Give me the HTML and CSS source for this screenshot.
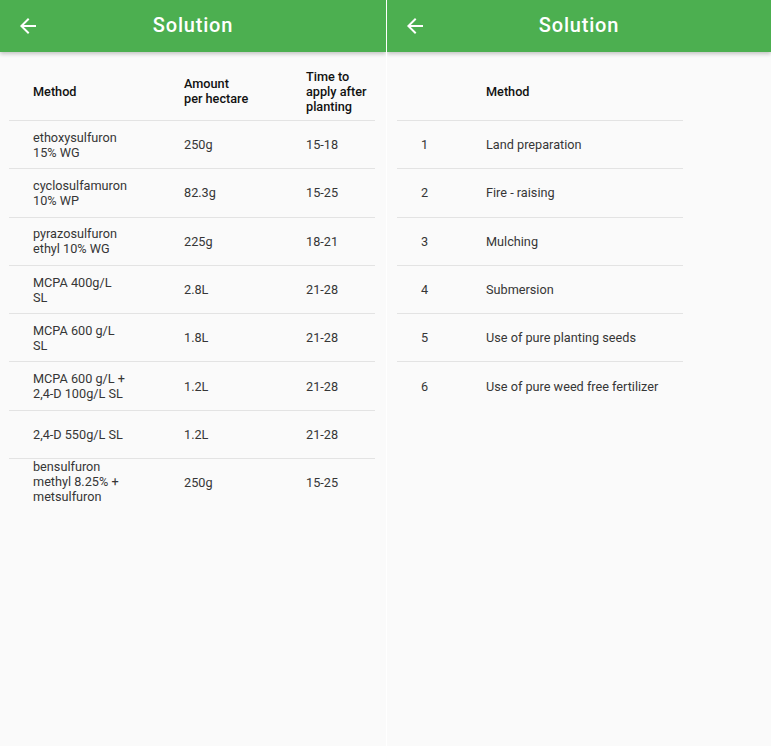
FILE: index.html
```html
<!DOCTYPE html>
<html lang="en">
<head>
<meta charset="utf-8">
<title>Solution</title>
<link rel="stylesheet" href="styles.css">
</head>
<body>
<div class="screens">
  <section class="panel panel-left">
    <header class="appbar">
      <div class="lead">
        <svg class="back" viewBox="0 0 24 24" width="24" height="24"><path d="M20 11H7.83l5.59-5.59L12 4l-8 8 8 8 1.41-1.41L7.83 13H20v-2z"/></svg>
      </div>
      <h1 class="title">Solution</h1>
      <div></div>
    </header>
    <div class="content content-left">
      <div class="table table-chem">
        <div class="row head">
          <div class="cell">Method</div>
          <div class="cell">Amount<br>per hectare</div>
          <div class="cell">Time to<br>apply after<br>planting</div>
        </div>
        <div class="row">
          <div class="cell">ethoxysulfuron<br>15% WG</div>
          <div class="cell">250g</div>
          <div class="cell">15-18</div>
        </div>
        <div class="row">
          <div class="cell">cyclosulfamuron<br>10% WP</div>
          <div class="cell">82.3g</div>
          <div class="cell">15-25</div>
        </div>
        <div class="row">
          <div class="cell">pyrazosulfuron<br>ethyl 10% WG</div>
          <div class="cell">225g</div>
          <div class="cell">18-21</div>
        </div>
        <div class="row">
          <div class="cell">MCPA 400g/L<br>SL</div>
          <div class="cell">2.8L</div>
          <div class="cell">21-28</div>
        </div>
        <div class="row">
          <div class="cell">MCPA 600 g/L<br>SL</div>
          <div class="cell">1.8L</div>
          <div class="cell">21-28</div>
        </div>
        <div class="row">
          <div class="cell">MCPA 600 g/L +<br>2,4-D 100g/L SL</div>
          <div class="cell">1.2L</div>
          <div class="cell">21-28</div>
        </div>
        <div class="row">
          <div class="cell">2,4-D 550g/L SL</div>
          <div class="cell">1.2L</div>
          <div class="cell">21-28</div>
        </div>
        <div class="row">
          <div class="cell cell-overflow">bensulfuron<br>methyl 8.25% +<br>metsulfuron<br>methyl</div>
          <div class="cell">250g</div>
          <div class="cell">15-25</div>
        </div>
      </div>
    </div>
  </section>
  <section class="panel panel-right">
    <header class="appbar">
      <div class="lead">
        <svg class="back" viewBox="0 0 24 24" width="24" height="24"><path d="M20 11H7.83l5.59-5.59L12 4l-8 8 8 8 1.41-1.41L7.83 13H20v-2z"/></svg>
      </div>
      <h1 class="title">Solution</h1>
      <div></div>
    </header>
    <div class="content content-right">
      <div class="table table-steps">
        <div class="row head">
          <div class="cell"></div>
          <div class="cell">Method</div>
        </div>
        <div class="row"><div class="cell">1</div><div class="cell">Land preparation</div></div>
        <div class="row"><div class="cell">2</div><div class="cell">Fire - raising</div></div>
        <div class="row"><div class="cell">3</div><div class="cell">Mulching</div></div>
        <div class="row"><div class="cell">4</div><div class="cell">Submersion</div></div>
        <div class="row"><div class="cell">5</div><div class="cell">Use of pure planting seeds</div></div>
        <div class="row"><div class="cell">6</div><div class="cell">Use of pure weed free fertilizer</div></div>
      </div>
    </div>
  </section>
</div>
</body>
</html>
```

FILE: styles.css
```css
* { box-sizing: border-box; }

html, body {
  margin: 0;
  padding: 0;
  background: #ffffff;
}

body {
  font-family: Roboto, "Liberation Sans", Arial, sans-serif;
}

.screens {
  display: flex;
  gap: 1px;
  width: 771px;
  height: 746px;
  overflow: hidden;
}

.panel {
  display: flex;
  flex-direction: column;
  background: #fafafa;
  height: 746px;
  overflow: hidden;
}

.panel-left { width: 386px; }
.panel-right { width: 384px; }

.appbar {
  position: relative;
  z-index: 1;
  flex: 0 0 52px;
  height: 52px;
  background: #4caf50;
  box-shadow: 0 2px 4px rgba(0, 0, 0, 0.22);
  display: grid;
  grid-template-columns: 1fr auto 1fr;
  align-items: center;
}

.lead {
  display: flex;
  align-items: center;
  padding-left: 16px;
}

.back {
  fill: #ffffff;
  display: block;
}

.title {
  margin: 0;
  color: #ffffff;
  font-size: 20px;
  font-weight: 500;
  letter-spacing: 0.8px;
  line-height: 22px;
  padding-bottom: 3px;
}

.content {
  padding-top: 10px;
}

.content-left { padding-left: 9px; }
.content-right { padding-left: 10px; }

.table {
  font-size: 12.7px;
  line-height: 15px;
}

.table-chem { width: 366px; }
.table-steps { width: 286px; }

.row {
  display: grid;
  grid-template-rows: minmax(0, 1fr);
  align-items: center;
  padding-left: 24px;
  height: 48.3px;
  border-top: 1px solid #e3e3e3;
  overflow: hidden;
  color: #363636;
}

.row.head {
  height: 58px;
  border-top: none;
  color: #111111;
  font-weight: 500;
}

.table-chem .row { grid-template-columns: 151px 122px 1fr; }
.table-steps .row { grid-template-columns: 65px 1fr; }

.cell { white-space: nowrap; }

.cell-overflow {
  align-self: start;
  padding-top: 0;
}
```
